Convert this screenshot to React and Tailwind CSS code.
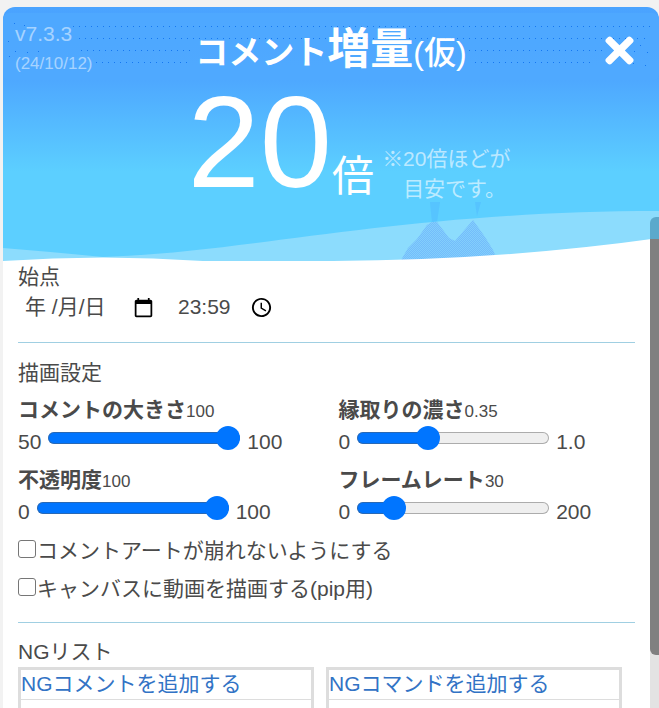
import React, { useState } from 'react';
import { FaTimes } from 'react-icons/fa';
import { MdCalendarToday, MdAccessTime } from 'react-icons/md';

const Slider = ({ id, label, min, max, minLabel = min, maxLabel = max, step = 1, initial }) => {
  const [value, setValue] = useState(initial);
  const percent = ((value - min) / (max - min)) * 100;

  return (
    <div>
      <label htmlFor={id} className="flex h-[35px] items-center font-bold">
        <span>{label}</span>
        <span className="pt-1 text-[17px] font-normal">{value}</span>
      </label>
      <div className="flex h-[35px] items-start">
        <span className="pt-px leading-7">{minLabel}</span>
        <input
          id={id}
          type="range"
          min={min}
          max={max}
          step={step}
          value={value}
          onChange={(e) => setValue(Number(e.target.value))}
          style={{ '--fill': `${percent}%` }}
          className="
            mx-[7px] h-[22px] w-48 appearance-none bg-transparent
            [&::-webkit-slider-runnable-track]:h-3
            [&::-webkit-slider-runnable-track]:rounded-full
            [&::-webkit-slider-runnable-track]:shadow-[inset_0_0_0_1px_rgba(90,90,90,0.45)]
            [&::-webkit-slider-runnable-track]:bg-[linear-gradient(to_right,#0075ff_var(--fill),#efefef_var(--fill))]
            [&::-webkit-slider-thumb]:-mt-[6px]
            [&::-webkit-slider-thumb]:size-6
            [&::-webkit-slider-thumb]:appearance-none
            [&::-webkit-slider-thumb]:rounded-full
            [&::-webkit-slider-thumb]:bg-[#0075ff]
          "
        />
        <span className="pt-px leading-7">{maxLabel}</span>
      </div>
    </div>
  );
};

const CheckRow = ({ children }) => (
  <label className="flex h-[38px] items-center">
    <input
      type="checkbox"
      className="mb-1 size-[18px] shrink-0 appearance-none rounded-[3px] border border-[#767676] bg-white checked:bg-[#0075ff]"
    />
    <span className="pl-px">{children}</span>
  </label>
);

const NgList = ({ children }) => (
  <ul className="flex-1 border-[3px] border-b-0 border-[#dddddd]">
    <li className="h-[30px] border-b border-[#dddddd] leading-7">
      <a href="#add" className="text-[#3273c5]">{children}</a>
    </li>
  </ul>
);

const Waves = () => (
  <svg
    className="absolute bottom-0 left-0 h-[60px] w-full"
    viewBox="0 0 656 60"
    preserveAspectRatio="none"
    aria-hidden="true"
  >
    <defs>
      <pattern id="mesh" width="2" height="2" patternUnits="userSpaceOnUse">
        <rect width="1" height="1" fill="#6eb4fa" />
        <rect x="1" y="1" width="1" height="1" fill="#6eb4fa" />
      </pattern>
    </defs>
    <path d="M427 0h10l-3 20h-5z M472 0h6l-4 14z" fill="#50b9ff" opacity="0.5" />
    <path d="M0 46Q50 50 100 55C250 50 400 9 656 9V60H0Z" fill="#8cdcfd" />
    <path
      d="M397 60L405 46 414 37 424 23 429 20H434L446 36 452 39 470 18 482 35 490 48 495 60Z"
      fill="#7cc6fb"
      opacity="0.6"
    />
    <path
      d="M397 60L405 46 414 37 424 23 429 20H434L446 36 452 39 470 18 482 35 490 48 495 60Z"
      fill="url(#mesh)"
      opacity="0.7"
    />
    <path d="M0 59Q100 52 200 59L330 59Q500 58 656 36V62H0Z" fill="#fff" />
  </svg>
);

const Dots = () => (
  <svg
    className="absolute inset-x-0 top-0 h-[73px] w-full"
    viewBox="0 0 656 73"
    preserveAspectRatio="none"
    aria-hidden="true"
  >
    <rect y="6" width="656" height="67" rx="6" fill="#50aaff" opacity="0.7" />
    <path
      d="M70 19.5H650M76 31.5H640M78 43.5H189M466 43.5H600M93 55.5H186M472 55.5H590"
      stroke="#1678f0"
      strokeDasharray="1 5"
    />
    <path
      d="M11 16.5h1M21 18.5h1M5 34.5h1M6 49.5h1M12 44.5h1M24 45.5h1M35 44.5h1M641 31.5h1M631 44.5h1M644 45.5h1M637 38.5h1M630 56.5h1M642 58.5h1"
      stroke="#1678f0"
    />
  </svg>
);

const Header = () => (
  <header className="relative overflow-hidden rounded-t-xl bg-[linear-gradient(#4aa3ff,#4ea8ff_73px,#5ccfff_165px,#5ccfff)] pb-[58px] text-white">
    <Dots />
    <div className="relative grid h-[73px] grid-cols-[1fr_auto_1fr]">
      <div className="pt-3 pl-3 text-white/50">
        <p className="leading-[30px]">v7.3.3</p>
        <p className="text-[17px] leading-[30px]">(24/10/12)</p>
      </div>
      <h1 className="flex items-baseline pt-3 text-[33px] leading-[60px] font-bold">
        <span>コメント</span>
        <span className="text-[43px]">増量</span>
        <span className="text-[32px] font-medium">(仮)</span>
      </h1>
      <button
        type="button"
        aria-label="閉じる"
        className="mt-[23px] mr-[19px] self-start justify-self-end"
      >
        <FaTimes size={41} />
      </button>
    </div>
    <div className="relative flex items-end justify-center pl-9">
      <span className="text-[130px] leading-[124px]">20</span>
      <span className="text-[42px] leading-[55px]">倍</span>
      <p className="ml-2 leading-[30px] text-white/60">
        <span className="block">※20倍ほどが</span>
        <span className="block pl-[21px]">目安です。</span>
      </p>
    </div>
    <Waves />
  </header>
);

export default function App() {
  return (
    <div className="flex h-screen flex-col overflow-hidden bg-[#f2f2f2] pt-[7px] pl-[3px] font-['Liberation_Sans','Noto_Sans_CJK_JP',sans-serif] text-[21px] leading-[30px] text-[#4a4a4a]">
      <Header />
      <div className="flex flex-1 bg-white">
        <main className="flex flex-1 flex-col pr-[15px] pl-[15px]">
          <section className="border-b border-[#a0cfe2] pb-5">
            <h2 className="leading-[30px]">始点</h2>
            <div className="flex h-[30px] items-center">
              <input
                type="text"
                aria-label="日付"
                defaultValue="年 /月/日"
                className="ml-[7px] w-[108px] bg-transparent"
              />
              <button type="button" aria-label="カレンダー" className="text-black">
                <MdCalendarToday size={21} />
              </button>
              <input
                type="text"
                aria-label="時刻"
                defaultValue="23:59"
                className="ml-6 w-[72px] bg-transparent"
              />
              <button type="button" aria-label="時計" className="text-black">
                <MdAccessTime size={23} />
              </button>
            </div>
          </section>

          <section className="border-b border-[#a0cfe2] pt-[15px] pb-[14px]">
            <h2 className="h-[34px] leading-[30px]">描画設定</h2>
            <div className="grid grid-cols-2 gap-x-6">
              <Slider id="size" label="コメントの大きさ" min={50} max={100} initial={100} />
              <Slider id="outline" label="縁取りの濃さ" min={0} max={1} maxLabel="1.0" step={0.05} initial={0.35} />
              <Slider id="opacity" label="不透明度" min={0} max={100} initial={100} />
              <Slider id="fps" label="フレームレート" min={0} max={200} initial={30} />
            </div>
            <CheckRow>コメントアートが崩れないようにする</CheckRow>
            <CheckRow>キャンバスに動画を描画する(pip用)</CheckRow>
          </section>

          <section className="flex flex-1 flex-col pt-[14px]">
            <h2 className="leading-[30px]">NGリスト</h2>
            <div className="flex flex-1 gap-3 pr-[13px]">
              <NgList>NGコメントを追加する</NgList>
              <NgList>NGコマンドを追加する</NgList>
            </div>
          </section>
        </main>

        {/* scroll bar, its thumb reaches up into the header */}
        <div className="relative w-[9px] bg-[#e3e3e3]">
          <div className="absolute inset-x-0 -top-[45px] h-[438px] rounded-l-md bg-[linear-gradient(#5ba9cc_22px,#808080_22px)]" />
        </div>
      </div>
    </div>
  );
}
